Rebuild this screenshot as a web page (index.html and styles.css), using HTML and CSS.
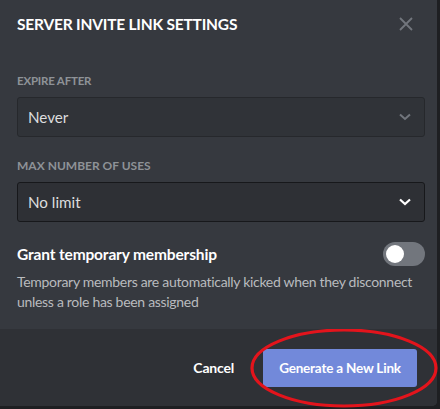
FILE: index.html
```html
<!DOCTYPE html>
<html>
<head>
<meta charset="utf-8">
<link rel="stylesheet" href="styles.css">
</head>
<body>
<div class="modal">
  <div class="header">
    <h1 class="title">SERVER INVITE LINK SETTINGS</h1>
    <svg class="close" width="16" height="16" viewBox="0 0 16 16"><path d="M2 2 L14 14 M14 2 L2 14" stroke="#72767d" stroke-width="1.8" fill="none"/></svg>
  </div>
  <div class="content">
    <div class="label">EXPIRE AFTER</div>
    <div class="select select-a">
      <span>Never</span>
      <svg class="chev" width="14" height="10" viewBox="0 0 14 10"><path d="M2 2.5 L7 7 L12 2.5" stroke="#72767d" stroke-width="2" fill="none"/></svg>
    </div>
    <div class="label label-2">MAX NUMBER OF USES</div>
    <div class="select select-b">
      <span>No limit</span>
      <svg class="chev" width="14" height="10" viewBox="0 0 14 10"><path d="M2 2.5 L7 7 L12 2.5" stroke="#ffffff" stroke-width="2.2" fill="none"/></svg>
    </div>
    <div class="row">
      <span class="row-title">Grant temporary membership</span>
      <div class="toggle"><div class="knob"></div></div>
    </div>
    <p class="desc">Temporary members are automatically kicked when they disconnect unless a role has been assigned</p>
  </div>
  <div class="footer">
    <button class="cancel">Cancel</button>
    <button class="primary">Generate a New Link</button>
    <svg class="ring" width="190" height="80" viewBox="0 0 190 80"><ellipse cx="94" cy="39" rx="92" ry="38" stroke="#e3141c" stroke-width="3.2" fill="none"/></svg>
  </div>
</div>
</body>
</html>
```
FILE: styles.css
```css
html, body {
  margin: 0;
  padding: 0;
  background: #1e1f22;
  width: 440px;
  height: 409px;
  overflow: hidden;
}
body {
  font-family: Lato, "Open Sans", sans-serif;
}
.modal {
  width: 437px;
  height: 406px;
  background: #36393f;
  border-radius: 0 0 5px 0;
  display: flex;
  flex-direction: column;
  position: relative;
}
.header {
  display: flex;
  align-items: center;
  justify-content: space-between;
  padding: 12px 23px 0 17px;
  height: 24px;
}
.title {
  margin: 0;
  font-size: 15.5px;
  font-weight: 700;
  color: #ffffff;
  line-height: 20px;
  letter-spacing: -0.2px;
}
.close { display: block; }
.content {
  padding: 0 12px 0 17px;
  flex: 1;
}
.label {
  margin-top: 37px;
  font-size: 11.5px;
  font-weight: 700;
  color: #8e9297;
  line-height: 16px;
  letter-spacing: -0.2px;
}
.label-2 {
  margin-top: 21px;
  font-size: 12px;
  letter-spacing: 0;
}
.select {
  margin-top: 8px;
  height: 38px;
  border-radius: 3px;
  display: flex;
  align-items: center;
  justify-content: space-between;
  padding: 0 12px 0 10px;
  font-size: 15.2px;
  color: #dcddde;
}
.select-a {
  background: #303338;
  border: 1px solid #26282c;
}
.select-b {
  background: #2e3035;
  border: 1px solid #17181b;
}
.chev { display: block; }
.row {
  margin-top: 20px;
  height: 24px;
  display: flex;
  align-items: center;
  justify-content: space-between;
}
.row-title {
  font-size: 15.5px;
  font-weight: 700;
  color: #ffffff;
  letter-spacing: -0.15px;
}
.toggle {
  width: 42px;
  height: 24px;
  border-radius: 12px;
  background: #72767d;
  position: relative;
}
.knob {
  position: absolute;
  left: 3px;
  top: 3px;
  width: 18px;
  height: 18px;
  border-radius: 50%;
  background: #ffffff;
}
.desc {
  margin: 6px 0 0;
  font-size: 14px;
  line-height: 20px;
  color: #b9bbbe;
  letter-spacing: -0.3px;
}
.footer {
  height: 77px;
  background: #2f3136;
  display: flex;
  align-items: center;
  justify-content: flex-end;
  padding: 0 20px;
  gap: 29px;
  position: relative;
  border-radius: 0 0 5px 0;
}
button {
  font-family: inherit;
  border: none;
  cursor: pointer;
}
.cancel {
  background: none;
  color: #ffffff;
  font-size: 14px;
  font-weight: 700;
  padding: 0;
  letter-spacing: -0.2px;
}
.primary {
  background: #7289da;
  color: #ffffff;
  font-size: 13.5px;
  font-weight: 700;
  height: 38px;
  width: 154px;
  border-radius: 3px;
  padding: 0;
  letter-spacing: -0.2px;
}
.ring {
  position: absolute;
  left: 250px;
  top: 0px;
}
```
